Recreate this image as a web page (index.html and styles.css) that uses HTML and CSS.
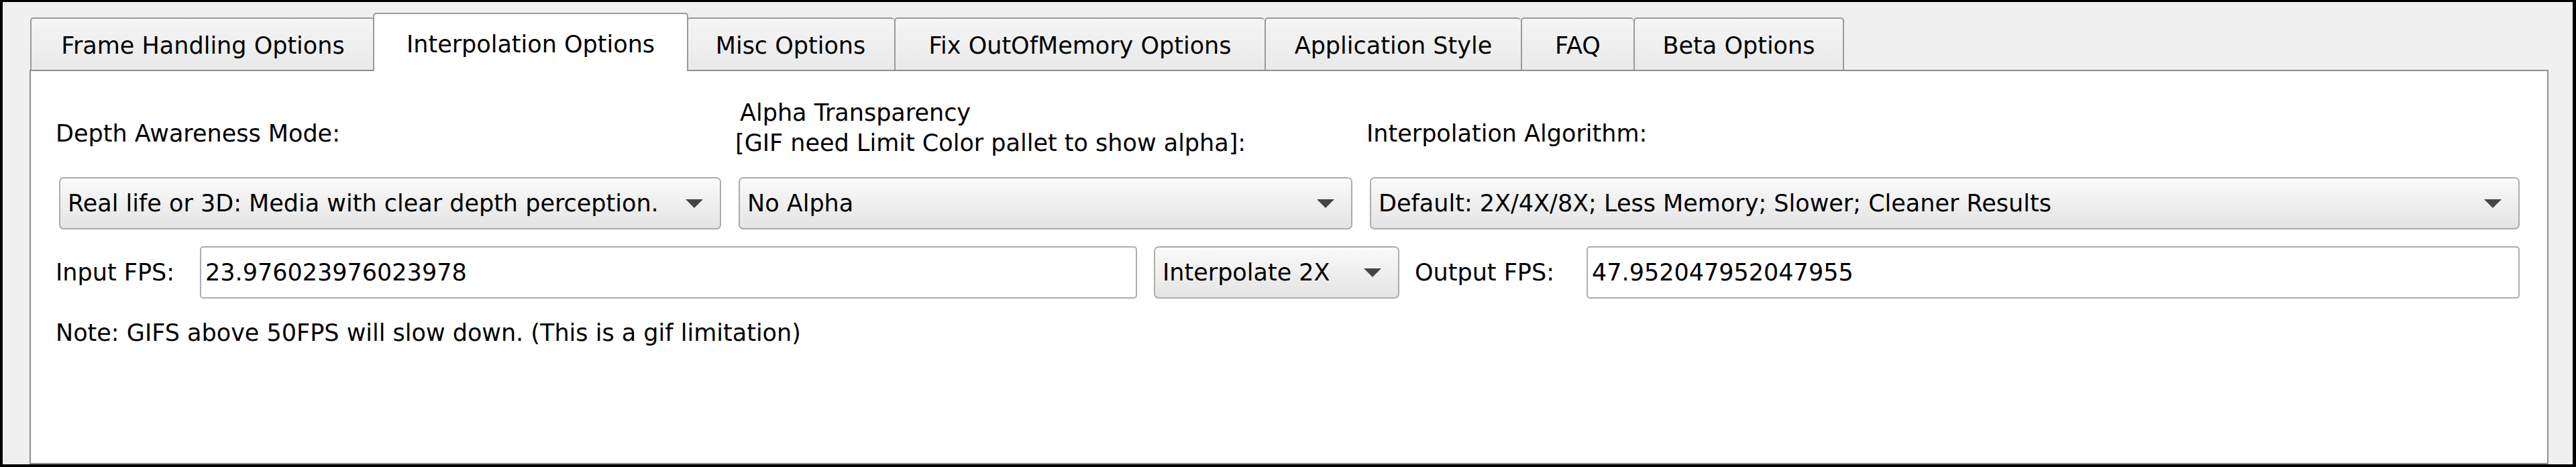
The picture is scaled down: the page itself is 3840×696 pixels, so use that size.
FILE: index.html
```html
<!DOCTYPE html>
<html>
<head>
<meta charset="utf-8">
<link rel="stylesheet" href="styles.css">
</head>
<body>
<div class="window">
  <div class="tabbar">
    <div class="tab t-frame">Frame Handling Options</div>
    <div class="tab t-interp active">Interpolation Options</div>
    <div class="tab t-misc after-active">Misc Options</div>
    <div class="tab t-fix">Fix OutOfMemory Options</div>
    <div class="tab t-app">Application Style</div>
    <div class="tab t-faq">FAQ</div>
    <div class="tab t-beta last">Beta Options</div>
  </div>
  <div class="pane">
    <div class="grid3">
      <div class="lbl single">Depth Awareness Mode:</div>
      <div class="lbl double"><span class="indent">Alpha Transparency</span><br>[GIF need Limit Color pallet to show alpha]:</div>
      <div class="lbl single">Interpolation Algorithm:</div>
      <div class="combo"><span class="ctext">Real life or 3D: Media with clear depth perception.</span><span class="arrow"></span></div>
      <div class="combo"><span class="ctext">No Alpha</span><span class="arrow"></span></div>
      <div class="combo"><span class="ctext">Default: 2X/4X/8X; Less Memory; Slower; Cleaner Results</span><span class="arrow"></span></div>
    </div>
    <div class="row2">
      <div class="lbl">Input FPS:</div>
      <div class="field">23.976023976023978</div>
      <div class="combo"><span class="ctext">Interpolate 2X</span><span class="arrow"></span></div>
      <div class="lbl out">Output FPS:</div>
      <div class="field">47.952047952047955</div>
    </div>
    <div class="lbl note">Note: GIFS above 50FPS will slow down. (This is a gif limitation)</div>
  </div>
</div>
</body>
</html>
```
FILE: styles.css
```css
html, body {
  margin: 0;
  padding: 0;
}
body {
  background: #000;
  font-family: "DejaVu Sans", "Liberation Sans", sans-serif;
  font-size: 35px;
  color: #000;
  height: 696px;
  overflow: hidden;
}
.window {
  margin: 3px 5px 0 4px;
  height: 689px;
  background: #f0f0f0;
  display: flex;
  flex-direction: column;
}
.tabbar {
  flex: none;
  height: 101px;
  display: flex;
  align-items: flex-end;
  padding-left: 41px;
}
.tab {
  box-sizing: border-box;
  flex: none;
  height: 78px;
  border: 2px solid #9a9a9a;
  border-bottom: none;
  border-right: none;
  border-radius: 5px 5px 0 0;
  background: linear-gradient(#f5f5f5, #e9e9e9);
  display: flex;
  align-items: center;
  justify-content: center;
  white-space: nowrap;
  line-height: 1;
  padding-top: 4px;
}
.tab.last {
  border-right: 2px solid #9a9a9a;
}
.tab.active {
  height: 87px;
  margin: 0 -2px -2px;
  border-right: 2px solid #9a9a9a;
  background: #fff;
  position: relative;
  z-index: 1;
  padding-top: 6px;
}
.tab.after-active {
  border-left: none;
}
.t-frame { width: 513px; }
.t-interp { width: 470px; }
.t-misc { width: 309px; }
.t-fix { width: 552px; }
.t-app { width: 382px; }
.t-faq { width: 168px; }
.t-beta { width: 314px; }

.pane {
  flex: 1;
  min-height: 0;
  box-sizing: border-box;
  margin: 0 36px 0 40px;
  border: 2px solid #8f8f8f;
  background: #fff;
  padding: 40px 41px 0 42px;
}
.grid3 {
  display: grid;
  grid-template-columns: 987px 915px 1fr;
  grid-template-rows: 90px 78px;
  column-gap: 26px;
  row-gap: 28px;
}
.lbl {
  line-height: 35px;
  white-space: nowrap;
  margin-left: -5px;
  align-self: center;
}
.lbl.double {
  line-height: 45px;
}
.lbl.single {
  padding-top: 16px;
}
.lbl.out {
  margin-left: -2px;
}
.indent {
  margin-left: 7px;
}
.combo {
  box-sizing: border-box;
  height: 78px;
  border: 2px solid #acacac;
  border-radius: 7px;
  background: linear-gradient(#fafafa, #efefef 50%, #e4e4e4);
  display: flex;
  align-items: center;
  justify-content: space-between;
  padding: 0 25px 0 11px;
  white-space: nowrap;
  overflow: hidden;
}
.ctext {
  overflow: hidden;
}
.arrow {
  flex: none;
  width: 0;
  height: 0;
  border-left: 13px solid transparent;
  border-right: 13px solid transparent;
  border-top: 13px solid #454545;
  margin-left: 12px;
}
.row2 {
  margin-top: 25px;
  display: grid;
  grid-template-columns: 185px 1397px 366px 229px 1fr;
  column-gap: 25px;
  align-items: center;
  height: 78px;
}
.field {
  box-sizing: border-box;
  height: 78px;
  border: 2px solid #abadb3;
  border-radius: 5px;
  background: #fff;
  display: flex;
  align-items: center;
  padding: 0 6px;
  white-space: nowrap;
}
.note {
  margin-top: 34px;
  line-height: 35px;
}
```
